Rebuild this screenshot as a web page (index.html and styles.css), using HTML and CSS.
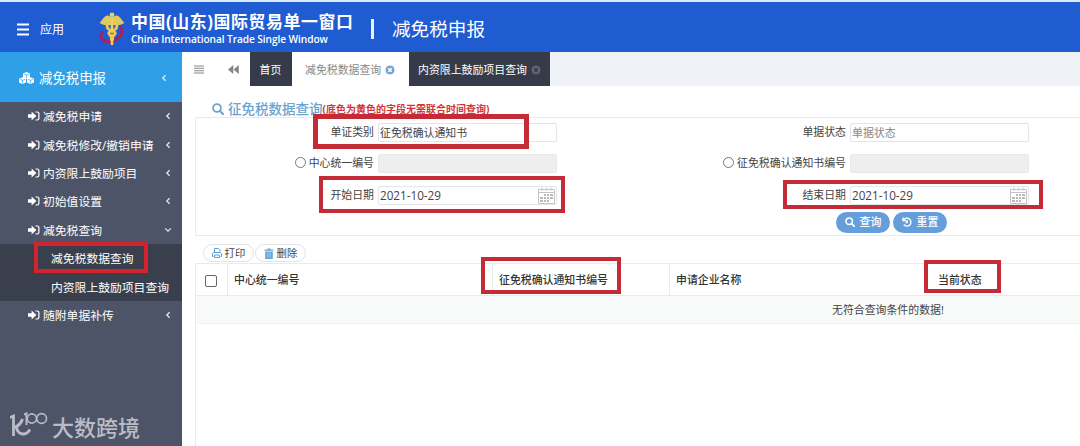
FILE: index.html
```
<!DOCTYPE html>
<html lang="zh-CN">
<head>
    <meta charset="UTF-8">
    <meta name="viewport" content="width=device-width, initial-scale=1.0">
    <title>减免税申报</title>
    <link rel="stylesheet" href="styles.css">
</head>
<body>
<!-- shared icons -->
<svg class="sprite">
    <symbol id="signin" viewBox="0 0 12 10">
        <path d="M0 3.3h3.6V.5L8.4 5 3.600 9.500V6.700H0z" fill="currentColor"/>
        <path d="M7.500 1h1.700A1.700 1.700 0 0 1 10.900 2.700v4.600A1.700 1.700 0 0 1 9.200 9H7.500" fill="none" stroke="currentColor" stroke-width="1.200"/>
    </symbol>
    <symbol id="left" viewBox="0 0 6 8">
        <path d="M4.6 1.2 1.8 4l2.8 2.8" fill="none" stroke="currentColor" stroke-width="1.3"/>
    </symbol>
    <symbol id="search" viewBox="0 0 12 12">
        <circle cx="5" cy="5" r="3.9" fill="none" stroke="currentColor" stroke-width="1.8"/>
        <path d="m8 8 3.2 3.2" stroke="currentColor" stroke-width="2" stroke-linecap="round"/>
    </symbol>
    <symbol id="close" viewBox="0 0 10 10">
        <circle cx="5" cy="5" r="5" fill="currentColor"/>
        <path class="close-x" d="m3.3 3.3 3.4 3.4m0-3.4L3.3 6.7" stroke-width="1.6"/>
    </symbol>
    <symbol id="calendar" viewBox="0 0 17 17">
        <path d="M.5 2.5h16v14H.5zM1 5.500h15M4 .5v3M8.500.5v3M13 .5v3" fill="none" stroke="#c4c4c4"/>
        <path d="M6 7h2v2H6zM9 7h2v2H9zM12 7h3v2h-3zM2 10h3v2H2zM6 10h2v2H6zM9 10h2v2H9zM12 10h3v2h-3zM2 13h3v2H2zM6 13h2v2H6zM9 13h2v2H9z" fill="#b9b9b9"/>
    </symbol>
</svg>

<header class="header">
    <svg class="burger" viewBox="0 0 12 13"><path d="M0 1.500h12M0 6.500h12M0 11.500h12" stroke="#fff" stroke-width="2"/></svg>
    <span class="apps">应用</span>
    <svg class="logo" viewBox="0 0 26 34">
        <path d="M4 19.500C-.5 24 1.500 29.500 9 29.500c8 0 14-5 14-10.500 0-2-.8-3.500-2-4.500" fill="none" stroke="#a5235f" stroke-width="3"/>
        <path d="M.5 10.500C3 9.500 4 4.500 8 3.500c2-.4 3.500.5 5 2.500 1.500-2 3-2.900 5-2.500 4 1 5 6 7.500 7-2.500 2.500-6 3-9.500 2.500h-6C6.500 13.500 3 13 .5 10.500z" fill="#dccb62"/>
        <circle cx="13" cy="2.800" r="2.300" fill="#e6d36a"/>
        <path d="M13 5v28" stroke="#f0cf5c" stroke-width="2.600"/>
        <path d="M8.500 12.500c-1.500 4 1 5 4.500 6s4.500 3 2 5-4 2.500-2 5M17.500 12.500c1.500 4-1 5-4.500 6s-4.500 3-2 5 4 2.500 2 5" fill="none" stroke="#f1cc55" stroke-width="2.600"/>
        <path d="M10 15.500h1.500M14.500 15.500H16M12 21.500h2" stroke="#b4604a" stroke-width="1.400"/>
    </svg>
    <div class="brand">
        <div class="brand-cn">中国(山东)国际贸易单一窗口</div>
        <div class="brand-en">China International Trade Single Window</div>
    </div>
    <div class="divider"></div>
    <div class="system">减免税申报</div>
</header>

<div class="page">
    <nav class="sidebar">
        <a class="side-head">
            <svg class="cubes" viewBox="0 0 15 12">
                <path d="m7.500 0 3.500 1.500v4L7.500 7 4 5.500v-4zM3.500 5.300 7 6.800v3.700L3.500 12 0 10.500V6.800zM11.500 5.300 15 6.800v3.700L11.500 12 8 10.500V6.800z" fill="currentColor"/>
                <path d="m4.800 2 2.700 1.100L10.200 2M.8 7.300l2.700 1.100 2.700-1.100M8.800 7.300l2.700 1.100 2.700-1.100M7.500 3.200v3M3.500 8.500v2.800M11.500 8.500v2.800" fill="none" stroke="#2f9fe8" stroke-width=".7"/>
            </svg>
            <span>减免税申报</span>
            <svg class="arrow"><use href="#left"/></svg>
        </a>
        <a class="side-item"><svg class="signin"><use href="#signin"/></svg><span>减免税申请</span><svg class="arrow"><use href="#left"/></svg></a>
        <a class="side-item"><svg class="signin"><use href="#signin"/></svg><span>减免税修改/撤销申请</span><svg class="arrow"><use href="#left"/></svg></a>
        <a class="side-item"><svg class="signin"><use href="#signin"/></svg><span>内资限上鼓励项目</span><svg class="arrow"><use href="#left"/></svg></a>
        <a class="side-item"><svg class="signin"><use href="#signin"/></svg><span>初始值设置</span><svg class="arrow"><use href="#left"/></svg></a>
        <a class="side-item"><svg class="signin"><use href="#signin"/></svg><span>减免税查询</span><svg class="arrow down"><use href="#left"/></svg></a>
        <div class="submenu">
            <a class="side-sub">减免税数据查询</a>
            <a class="side-sub">内资限上鼓励项目查询</a>
        </div>
        <a class="side-item"><svg class="signin"><use href="#signin"/></svg><span>随附单据补传</span><svg class="arrow"><use href="#left"/></svg></a>
    </nav>

    <main class="main">
        <div class="tabs">
            <div class="tab-tool"><svg width="10" height="9" viewBox="0 0 10 9"><path d="M0 1h10M0 3.300h10M0 5.700h10M0 8h10" stroke="#888" stroke-width="1.100"/></svg></div>
            <div class="tab-tool"><svg width="11" height="9" viewBox="0 0 11 9"><path d="M5.300 0v9L0 4.500zM10.800 0v9L5.500 4.500z" fill="#858585"/></svg></div>
            <div class="tab home">首页</div>
            <div class="tab active">减免税数据查询<svg class="close"><use href="#close"/></svg></div>
            <div class="tab other">内资限上鼓励项目查询<svg class="close"><use href="#close"/></svg></div>
        </div>

        <div class="content">
            <h2 class="title"><svg class="title-icon"><use href="#search"/></svg>征免税数据查询<small>(底色为黄色的字段无需联合时间查询)</small></h2>

            <form class="query">
                <div class="row">
                    <label class="label">单证类别</label>
                    <div class="field">征免税确认通知书</div>
                    <label class="label">单据状态</label>
                    <div class="field placeholder">单据状态</div>
                </div>
                <div class="row">
                    <label class="label"><i class="radio"></i>中心统一编号</label>
                    <div class="field disabled"></div>
                    <label class="label"><i class="radio"></i>征免税确认通知书编号</label>
                    <div class="field disabled"></div>
                </div>
                <div class="row">
                    <label class="label">开始日期</label>
                    <div class="field date">2021-10-29<svg class="calendar"><use href="#calendar"/></svg></div>
                    <label class="label">结束日期</label>
                    <div class="field date">2021-10-29<svg class="calendar"><use href="#calendar"/></svg></div>
                </div>
                <div class="actions">
                    <span class="btn"><svg width="10" height="10"><use href="#search"/></svg>查询</span>
                    <span class="btn"><svg width="10" height="10" viewBox="0 0 10 10"><path d="M1.500 3A4 4 0 1 1 1.700 7.500M1 .5V3.500H4M5.200 3v2.500H3.500" fill="none" stroke="#fff" stroke-width="1.400"/></svg>重置</span>
                </div>
            </form>

            <div class="toolbar">
                <span class="tool"><svg width="10" height="10" viewBox="0 0 10 10"><path d="M2.500 4.500v-4h4l1.500 1.500v2.500M1.500 8.500h-1V5.500l1-1h7l1 1v3h-1M2.500 7h5v2.500h-5z" fill="none" stroke="#5f9fd0"/></svg>打印</span>
                <span class="tool del"><svg width="10" height="11" viewBox="0 0 10 11"><path d="M.5 1.500h3V.5h3v1h3v1.200h-9zM1.200 3.500h7.600V11H1.200z" fill="#68a5d6"/><path d="M3.500 4.500v5M5 4.500v5M6.500 4.500v5" stroke="#b7d4eb" stroke-width=".6"/></svg>删除</span>
            </div>

            <div class="table">
                <div class="thead">
                    <div class="th check"><i class="checkbox"></i></div>
                    <div class="th">中心统一编号</div>
                    <div class="th">征免税确认通知书编号</div>
                    <div class="th">申请企业名称</div>
                    <div class="th">当前状态</div>
                </div>
                <div class="empty">无符合查询条件的数据!</div>
            </div>
        </div>
    </main>
</div>

<!-- highlight frames -->
<div class="mark mark-menu"></div>
<div class="mark mark-type"></div>
<div class="mark mark-start"></div>
<div class="mark mark-end"></div>
<div class="mark mark-number"></div>
<div class="mark mark-status"></div>

<div class="watermark">
    <svg width="38" height="26" viewBox="0 0 38 26" fill="none" stroke="currentColor">
        <path d="M0 5.500 3.500 4v20" stroke-width="2.800"/>
        <path d="M4 15.500c3.500-1 7-4 8.500-8.500M6.500 14.500C7 22.500 15 25 20 17.500" stroke-width="3"/>
        <path d="m14 2.500 2.500-1V13" stroke-width="2"/>
        <path d="M26.500 6.500a4.600 4.600 0 1 0-9.200 0 4.600 4.600 0 0 0 9.200 0zM36.500 6.500a4.900 4.900 0 1 0-9.800 0 4.900 4.900 0 0 0 9.800 0z" stroke-width="1.600"/>
    </svg>
    <span>大数跨境</span>
</div>
</body>
</html>
```

FILE: styles.css
```
* {
    box-sizing: border-box;
}

body {
    margin: 0;
    height: 446px;
    overflow: hidden;
    position: relative;
    background: #fff;
    font-family: "Open Sans", "Noto Sans CJK SC", sans-serif;
    font-size: 10.9px;
    line-height: 16px;
    color: #444;
    white-space: nowrap;
}

svg {
    display: block;
    flex: none;
}

.sprite {
    display: none;
}

/* header */
.header {
    display: flex;
    align-items: center;
    height: 52px;
    padding-left: 17px;
    border-top: 2px solid #dcebf8;
    background: #1f5bd1;
    color: #fff;
}

.burger {
    width: 12px;
    height: 13px;
    margin-top: 4px;
}

.apps {
    margin: 5px 0 0 11px;
    width: 59px;
    font-size: 12px;
}

.logo {
    width: 26px;
    height: 34px;
    margin-top: 3px;
}

.brand {
    width: 246px;
    padding-left: 6px;
}

.brand-cn {
    font-size: 16.9px;
    font-weight: bold;
    line-height: 20px;
    letter-spacing: 0.6px;
    margin-top: 4px;
}

.brand-en {
    font-size: 10.2px;
    font-weight: 600;
    line-height: 13px;
    letter-spacing: -0.1px;
    margin-top: 1px;
}

.divider {
    width: 3px;
    height: 20px;
    margin-top: 4px;
    background: #e8f1ff;
}

.system {
    padding-left: 18px;
    margin-top: 3px;
    font-size: 18.6px;
    line-height: 24px;
}

.page {
    display: flex;
    height: 394px;
}

/* sidebar */
.sidebar {
    width: 182px;
    flex: none;
    background: #4e5467;
    color: #fff;
}

.side-head {
    display: flex;
    align-items: center;
    height: 50px;
    padding: 1px 15px 0 19px;
    background: #2f9fe8;
    font-size: 13.4px;
}

.cubes {
    width: 15px;
    height: 12px;
    margin-right: 5px;
}

.arrow {
    width: 6px;
    height: 8px;
    margin-left: auto;
    color: #e3e6ec;
}

.down {
    transform: rotate(-90deg);
}

.side-item {
    display: flex;
    align-items: center;
    height: 28.4px;
    padding: 0 11px 0 28px;
    font-size: 11.8px;
}

.signin {
    width: 12px;
    height: 10px;
    margin-right: 3px;
}

.submenu {
    background: #3a3f4d;
}

.side-sub {
    display: flex;
    align-items: center;
    height: 28.4px;
    padding-left: 51px;
    font-size: 11.8px;
}

/* tabs */
.main {
    flex: 1;
    min-width: 0;
}

.tabs {
    display: flex;
    height: 34px;
    background: #eff3f7;
}

.tab-tool {
    display: flex;
    align-items: center;
    justify-content: center;
    width: 34px;
    background: #fff;
}

.tab {
    display: flex;
    align-items: center;
    padding: 1px 10px 0 9.5px;
    background: #363b4a;
    color: #fff;
}

.home {
    width: 41.5px;
}

.active {
    width: 117px;
    padding-left: 13.5px;
    background: #fff;
    color: #888;
}

.other {
    width: 141.5px;
}

.close {
    width: 10px;
    height: 10px;
    margin-left: 4px;
    color: #78a3cf;
    stroke: #fff;
}

.other .close {
    color: #626775;
    stroke: #363b4a;
}

/* query form */
.content {
    padding: 14px 0 0 13px;
}

.title {
    display: flex;
    align-items: center;
    height: 17px;
    margin: 0;
    padding-left: 17px;
    font-size: 13.5px;
    font-weight: 500;
    color: #6ba3cf;
}

.title-icon {
    width: 12px;
    height: 12px;
    margin-right: 4px;
}

.title small {
    padding-top: 1px;
    font-size: 10px;
    font-weight: bold;
    color: #d5333a;
}

.query {
    height: 119px;
    padding-top: 5px;
    border: 1px solid #e8ebee;
    border-right: 0;
}

.row {
    display: grid;
    grid-template-columns: 178px 179px 285px 179px;
    column-gap: 4px;
    height: 31.3px;
}

.label {
    display: flex;
    align-items: center;
    justify-content: flex-end;
    height: 18px;
}

.radio {
    width: 11px;
    height: 11px;
    margin: -2px 3px 0 0;
    border: 1px solid #777;
    border-radius: 50%;
}

.field {
    display: flex;
    align-items: center;
    height: 19px;
    padding-left: 1px;
    border: 1px solid #e3e5e8;
    border-radius: 2px;
}

.placeholder {
    color: #888;
}

.disabled {
    background: #eee;
    border-color: #e8e8e8;
}

.date {
    font-size: 11.7px;
}

.calendar {
    width: 17px;
    height: 17px;
    margin: 0 1px 0 auto;
}

.actions {
    display: flex;
    gap: 3px;
    margin-top: -5px;
    padding-left: 640px;
}

.btn {
    display: flex;
    align-items: center;
    justify-content: center;
    gap: 5px;
    width: 54px;
    height: 21px;
    border-radius: 11px;
    background: #659edb;
    font-weight: 500;
    color: #fff;
}

/* result table */
.toolbar {
    display: flex;
    gap: 1px;
    height: 27px;
    padding: 8px 0 0 8px;
}

.tool {
    display: flex;
    align-items: center;
    justify-content: center;
    gap: 3px;
    width: 51px;
    height: 18px;
    border: 1px solid #e1e4e7;
    border-radius: 9px;
    font-size: 10.4px;
}

.table {
    height: 190px;
    border: 1px solid #e8ebee;
    border-right: 0;
}

.thead {
    display: grid;
    grid-template-columns: 32px 265px 177px 262px 1fr;
    height: 31px;
}

.th {
    display: flex;
    align-items: center;
    padding-left: 6px;
    border-right: 1px solid #e8ebee;
    font-weight: 500;
    color: #333;
}

.th:nth-child(n+4) {
    border-right: 0;
}

.checkbox {
    width: 12px;
    height: 12px;
    margin: 3px 0 0 3px;
    border: 1px solid #666;
    border-radius: 2px;
}

.empty {
    height: 29px;
    padding-left: 636px;
    border-top: 1px solid #e8ebee;
    border-bottom: 1px solid #eff1f3;
    background: #f8f9f9;
    line-height: 27px;
}

/* highlight frames */
.mark {
    position: absolute;
    border: 4px solid #c32b37;
}

.mark-menu {
    left: 34px;
    top: 242px;
    width: 114px;
    height: 31px;
    border-color: #d3242e;
}

.mark-type {
    left: 313px;
    top: 114px;
    width: 216px;
    height: 35px;
    border-width: 5px;
}

.mark-start {
    left: 319px;
    top: 176px;
    width: 246px;
    height: 37px;
}

.mark-end {
    left: 783px;
    top: 180px;
    width: 260px;
    height: 29px;
}

.mark-number {
    left: 481px;
    top: 257px;
    width: 140px;
    height: 37px;
}

.mark-status {
    left: 924px;
    top: 260px;
    width: 77px;
    height: 33px;
}

.watermark {
    position: absolute;
    left: 10px;
    top: 412px;
    display: flex;
    gap: 4px;
    color: #b9bcc6;
    font-size: 22px;
    font-weight: 500;
    line-height: 30px;
}
```
